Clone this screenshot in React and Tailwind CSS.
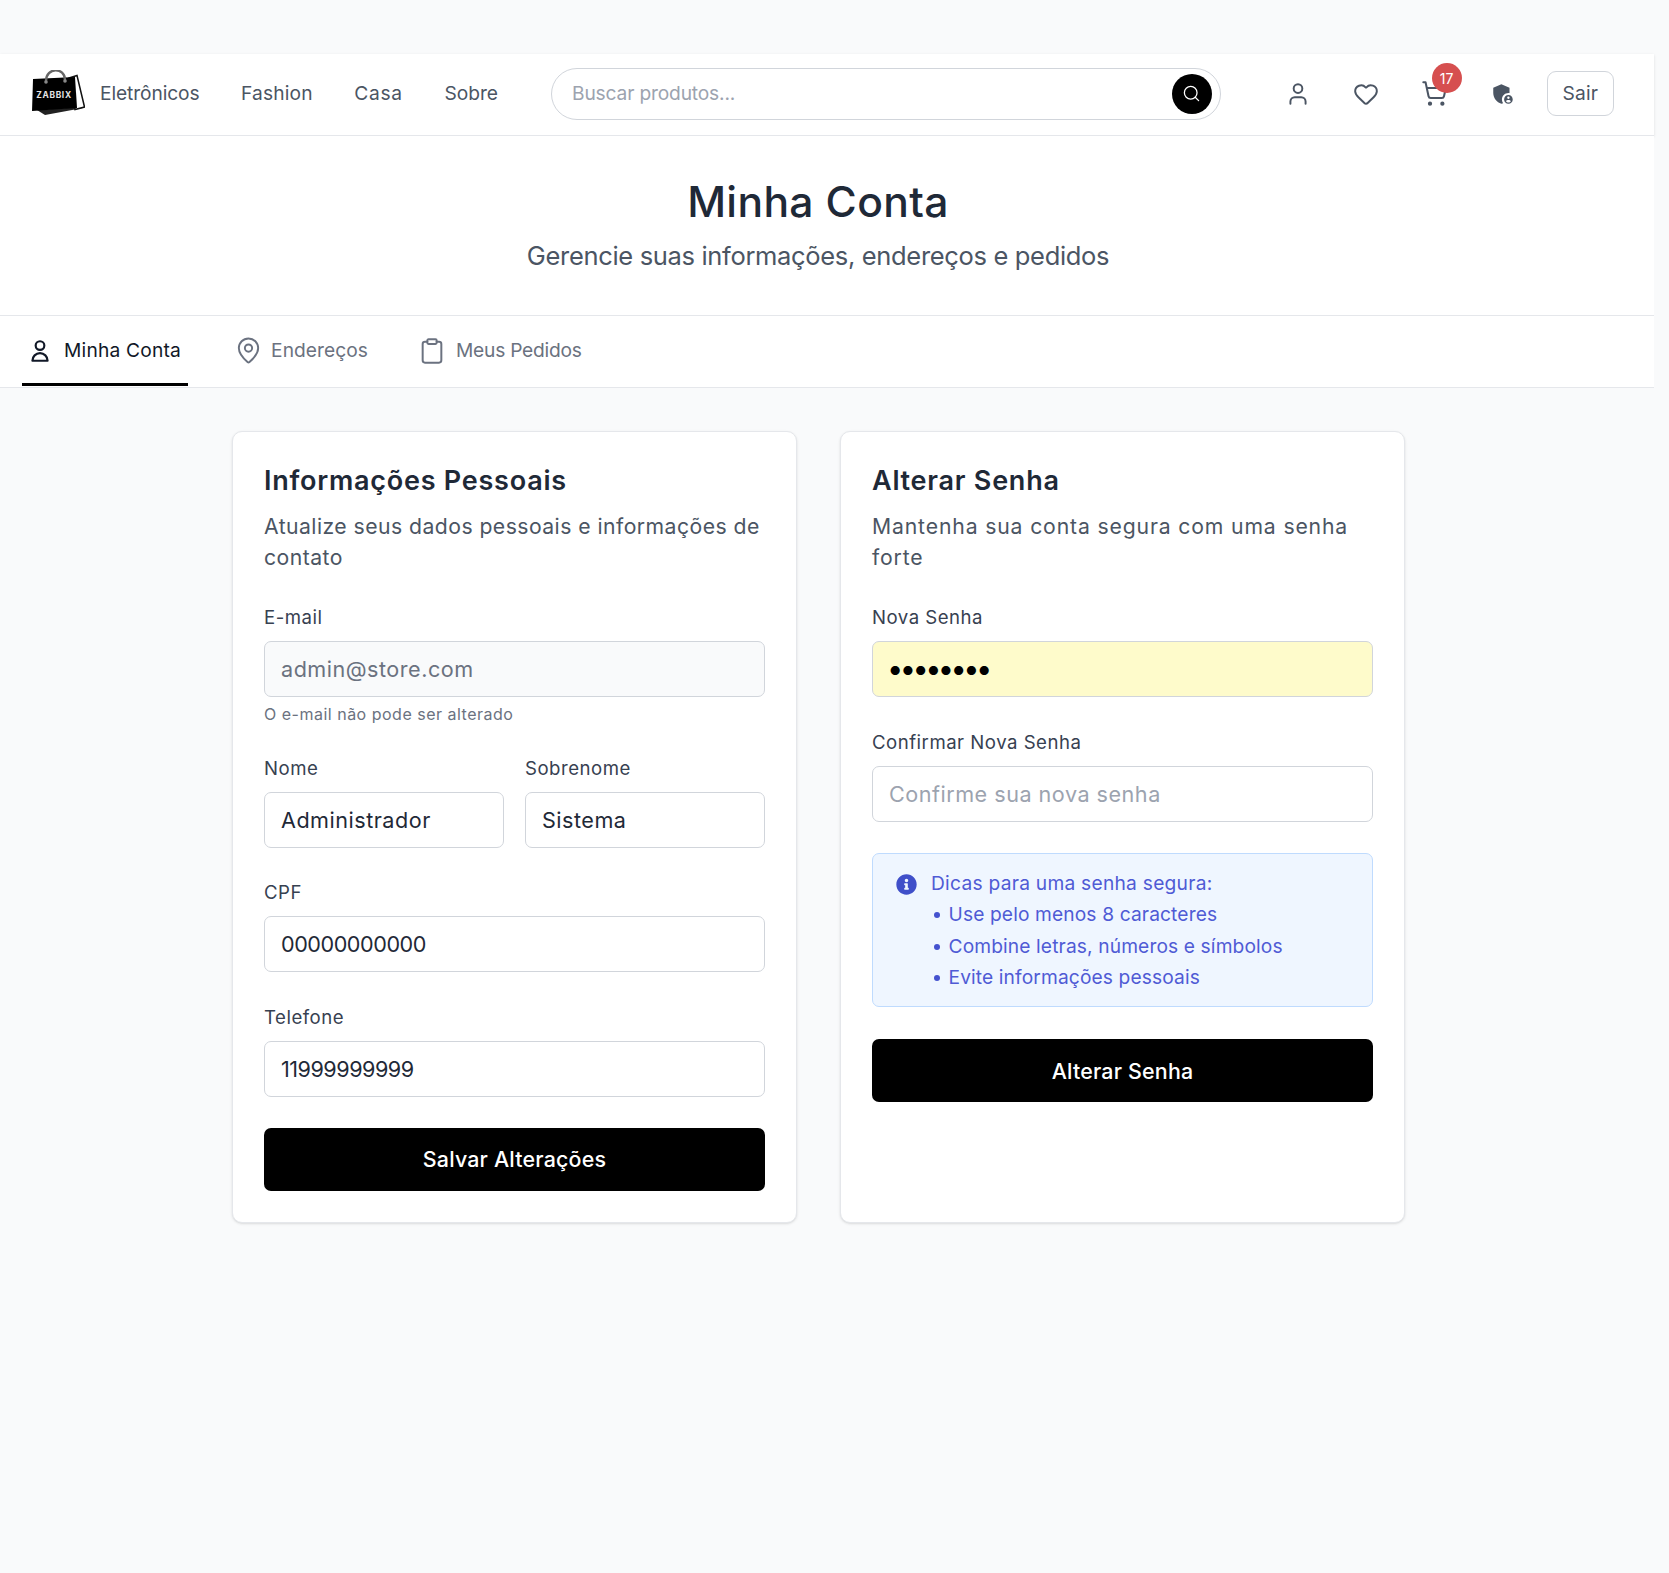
import React from "react";
import { User, Heart, ShoppingCart, Search, MapPin, Clipboard } from "lucide-react";
import { MdAdminPanelSettings } from "react-icons/md";
import { FaInfoCircle } from "react-icons/fa";
import { HiOutlineUser } from "react-icons/hi";

const font = { fontFamily: "Inter, 'Liberation Sans', sans-serif" };

function Logo() {
  return (
    <svg width="54" height="48" viewBox="0 0 54 48" className="shrink-0">
      <path d="M6 40 L50 37 L52 38 L14 45 Z" fill="#222" />
      <path d="M38 8 L46 5.5 L53.5 37 L44 39.5 Z" fill="#fff" stroke="#111" strokeWidth="1.5" />
      <path d="M2 9 L44 7 L46 38 L1 41 Z" fill="#000" />
      <path d="M15 11 C15 -3 34 -3 34 10" fill="none" stroke="#666" strokeWidth="2.4" />
      <circle cx="15" cy="12" r="1.8" fill="#888" />
      <circle cx="34" cy="11" r="1.8" fill="#888" />
      <text x="23" y="28" textAnchor="middle" fill="#e5e5e5" fontSize="8.4" fontWeight="700" letterSpacing="0.7" style={font}>ZABBIX</text>
    </svg>
  );
}

function Field({ label, value, placeholder, disabled, autofill, hint, type = "text", valueClass = "text-[21.6px] tracking-[0.5px]" }) {
  return (
    <div>
      <label className="mb-[10px] block h-[27px] text-[18.6px] leading-[27px] tracking-[0.5px] text-[#374151]">{label}</label>
      <input
        readOnly
        type={type}
        value={value ?? ""}
        placeholder={placeholder}
        style={font}
        className={`block h-[56px] w-full rounded-[7px] border border-[#d1d5db] px-[16px] outline-none placeholder:text-[#9ca3af] ${valueClass} ${
          disabled ? "bg-[#f9fafb] text-[#6b7280]" : autofill ? "bg-[#fefbcb] text-black" : "bg-white text-[#1f2937]"
        }`}
      />
      {hint && <p className="mt-[9px] mb-[1px] text-[16px] leading-[16px] tracking-[0.5px] text-[#6b7280]">{hint}</p>}
    </div>
  );
}

function Card({ title, subtitle, subtitleClass, children }) {
  return (
    <section className="rounded-[10px] border border-[#e5e7eb] bg-white px-[31px] pt-[33px] pb-[31px] shadow-sm">
      <h2 className="text-[27px] font-semibold leading-[32px] tracking-[0.75px] text-[#1f2937]">{title}</h2>
      <p className={`mt-[14px] mb-[31px] text-[21.2px] leading-[31px] text-[#4b5563] ${subtitleClass}`}>{subtitle}</p>
      {children}
    </section>
  );
}

function SubmitButton({ children }) {
  return (
    <button className="block h-[63px] w-full rounded-[7px] bg-black text-[21.4px] font-medium tracking-[0.2px] text-white">{children}</button>
  );
}

function Tab({ icon, label, active, className = "" }) {
  return (
    <div className={`flex h-[70px] items-center border-b-[3px] pt-[2px] text-[19.2px] ${active ? "border-black text-[#111827]" : "border-transparent text-[#6b7280]"} ${className}`}>
      {icon}
      <span>{label}</span>
    </div>
  );
}

function Tip({ children }) {
  return (
    <li className="flex items-center gap-[9px] pl-[2.5px] tracking-[0.12px]">
      <span className="size-[6px] shrink-0 rounded-full bg-[#4452cf]" />
      {children}
    </li>
  );
}

export default function App() {
  return (
    <div style={font} className="min-h-[1573px] bg-[#f9fafb] pt-[54px]">
      <div className="w-[1654px]">
        <header className="flex h-[82px] items-center border-b border-[#e5e7eb] bg-white pr-[40px] pb-[2px] pl-[31px] shadow-sm">
          <Logo />
          <nav className="ml-[15px] flex items-center gap-[41.5px] text-[19.2px] text-[#4b5563]">
            <span className="tracking-[-0.1px]">Eletrônicos</span>
            <span className="tracking-[0.15px]">Fashion</span>
            <span className="tracking-[0.75px]">Casa</span>
            <span>Sobre</span>
          </nav>
          <div className="ml-[53px] flex h-[52px] w-[675px] items-center justify-between rounded-full border border-[#d1d5db] pr-[8px] pl-[20px]">
            <span className="text-[19.2px] tracking-[-0.17px] text-[#9ca3af]">Buscar produtos...</span>
            <span className="flex size-[40px] items-center justify-center rounded-full bg-black">
              <Search size={19} className="text-white" strokeWidth={1.6} />
            </span>
          </div>
          <div className="ml-[64px] flex items-center gap-[42px] text-[#4b5563]">
            <User size={26} strokeWidth={1.8} />
            <Heart size={26} strokeWidth={1.8} />
            <div className="relative">
              <ShoppingCart size={27} strokeWidth={1.8} />
              <span className="absolute top-[-17px] left-[11px] flex size-[30px] items-center justify-center rounded-full bg-[#d64f4f] text-[14px] text-white">17</span>
            </div>
            <MdAdminPanelSettings size={26} />
          </div>
          <button className="ml-[31px] h-[45px] w-[68px] rounded-[9px] border border-[#d1d5db] text-[19.2px] tracking-[0.2px] text-[#4b5563]">Sair</button>
        </header>

        <div className="w-full border-b border-[#e5e7eb] bg-white pt-[40px] pb-[42px]">
          <div className="w-[1636px] text-center">
            <h1 className="text-[42.6px] leading-[51px] font-medium tracking-[0.35px] text-[#1f2937]">Minha Conta</h1>
            <p className="mt-[12px] text-[25.5px] leading-[34px] tracking-[-0.33px] text-[#4b5563]">Gerencie suas informações, endereços e pedidos</p>
          </div>
        </div>

        <div className="flex h-[72px] border-b border-[#e5e7eb] bg-white pl-[22px]">
          <Tab active label="Minha Conta" className="pr-[6.5px] pl-[5px] tracking-[0.2px]" icon={<HiOutlineUser size={26} className="mr-[11px] text-[#111827]" />} />
          <Tab label="Endereços" className="ml-[40.5px] px-[5.5px] tracking-[0.05px]" icon={<MapPin size={29} strokeWidth={1.6} className="mr-[8.5px]" />} />
          <Tab label="Meus Pedidos" className="ml-[39px] px-[5.5px] tracking-[-0.24px]" icon={<Clipboard size={28} strokeWidth={1.7} className="mr-[10px]" />} />
        </div>

        <main className="mt-[43px] ml-[232px] grid w-[1173px] grid-cols-2 gap-[43px]">
          <Card title="Informações Pessoais" subtitleClass="tracking-[0.45px]" subtitle="Atualize seus dados pessoais e informações de contato">
            <div className="flex flex-col gap-[31.5px]">
              <Field label="E-mail" value="admin@store.com" disabled hint="O e-mail não pode ser alterado" />
              <div className="grid grid-cols-2 gap-[21px]">
                <Field label="Nome" value="Administrador" />
                <Field label="Sobrenome" value="Sistema" />
              </div>
              <Field label="CPF" value="00000000000" valueClass="text-[21.6px] tracking-[-0.45px]" />
              <Field label="Telefone" value="11999999999" valueClass="text-[21.6px] tracking-[-0.5px]" />
              <SubmitButton>Salvar Alterações</SubmitButton>
            </div>
          </Card>
          <Card title="Alterar Senha" subtitleClass="tracking-[0.85px]" subtitle="Mantenha sua conta segura com uma senha forte">
            <div className="flex flex-col gap-[31.5px]">
              <Field label="Nova Senha" value="12345678" type="password" autofill valueClass="pb-[2px] pl-[14px] text-[29px] tracking-[-3.6px]" />
              <Field label="Confirmar Nova Senha" placeholder="Confirme sua nova senha" />
              <div className="flex gap-[14px] rounded-[7px] border border-[#bfdbfe] bg-[#eff6ff] pt-[14px] pr-[16px] pb-[12px] pl-[23px] text-[19.2px] leading-[31.4px] tracking-[0.25px] text-[#4f5bd5]">
                <FaInfoCircle size={21} className="mt-[6px] shrink-0 text-[#3f4fc9]" />
                <div>
                  <p>Dicas para uma senha segura:</p>
                  <ul>
                    <Tip>Use pelo menos 8 caracteres</Tip>
                    <Tip>Combine letras, números e símbolos</Tip>
                    <Tip>Evite informações pessoais</Tip>
                  </ul>
                </div>
              </div>
              <div className="mt-[1px]">
                <SubmitButton>Alterar Senha</SubmitButton>
              </div>
            </div>
          </Card>
        </main>
      </div>
    </div>
  );
}
